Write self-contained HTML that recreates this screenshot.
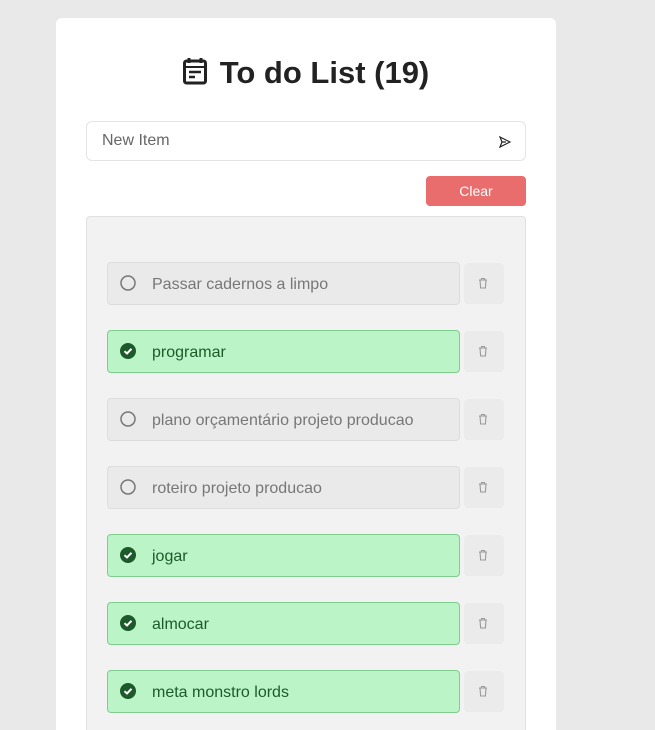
<!DOCTYPE html>
<html><head><meta charset="utf-8"><style>
html,body{margin:0;background:#e9e9e9;width:655px;height:730px;overflow:hidden;font-family:"Liberation Sans",sans-serif;}
.card{position:absolute;left:56px;top:18px;width:500px;height:712px;background:#fff;border-radius:6px 6px 0 0;overflow:hidden}
h1{position:absolute;left:0;top:37px;width:500px;margin:0;text-align:center;font-size:31px;font-weight:bold;color:#222;font-family:"Liberation Sans",sans-serif;}
h1 svg{vertical-align:-2px;margin-right:13px}
.inp{position:absolute;left:30px;top:103px;width:438px;height:38px;border:1px solid #e4e4e4;border-radius:6px;}
.inp span{position:absolute;left:15px;top:10px;font-size:16px;color:#666}
.inp svg{position:absolute;right:14px;top:14px}
.clear{position:absolute;left:370px;top:158px;width:100px;height:30px;background:#e96d6d;border-radius:4px;color:#fff;font-size:14px;text-align:center;line-height:30px}
.box{position:absolute;left:30px;top:198px;width:438px;height:520px;background:#f2f2f2;border:1px solid #e0e0e0;border-bottom:none;border-radius:4px 4px 0 0}
.item{position:absolute;left:20px;width:351px;height:41px;border:1px solid #ddd;background:#eaeaea;border-radius:4px;font-family:"Liberation Sans",sans-serif;font-size:16px;color:#777}
.item.d{background:#bbf5c7;border-color:#7fcc8e;color:#1d5a2a}
.item .t{position:absolute;left:44px;top:13px}
.item svg{position:absolute;left:12px;top:12px}
.tr{position:absolute;left:377px;width:40px;height:41px;background:#ebebeb;border-radius:4px}
.tr svg{position:absolute;left:14px;top:14px}
</style></head><body>
<div class="card">
<h1><svg width="24" height="28" viewBox="0 0 24 28"><rect x="1.5" y="4" width="21" height="22" rx="2" fill="none" stroke="#222" stroke-width="3"/><line x1="6" y1="1" x2="6" y2="6" stroke="#222" stroke-width="3"/><line x1="18" y1="1" x2="18" y2="6" stroke="#222" stroke-width="3"/><line x1="1.5" y1="10" x2="22.5" y2="10" stroke="#222" stroke-width="2"/><line x1="6" y1="15" x2="18" y2="15" stroke="#222" stroke-width="2.5"/><line x1="6" y1="20" x2="12" y2="20" stroke="#222" stroke-width="2.5"/></svg>To do List (19)</h1>
<div class="inp"><span>New Item</span><svg width="12" height="12" viewBox="0 0 12 12"><path d="M1 1L11 6L1 11L3 6Z M3 6H7" fill="none" stroke="#222" stroke-width="1.2"/></svg></div>
<div class="clear">Clear</div>
<div class="box" id="b"></div>
</div>
<script>
var items=[["Passar cadernos a limpo",0],["programar",1],["plano orçamentário projeto producao",0],["roteiro projeto producao",0],["jogar",1],["almocar",1],["meta monstro lords",1]];
var h="";items.forEach(function(it,i){var y=45+i*68;
var ic=it[1]?'<svg width="16" height="16"><circle cx="8" cy="8" r="8" fill="#1d5a2a"/><path d="M4.5 8.2L7 10.5L11.5 5.8" fill="none" stroke="#fff" stroke-width="2"/></svg>':'<svg width="16" height="16"><circle cx="8" cy="8" r="7" fill="none" stroke="#777" stroke-width="1.5"/></svg>';
h+='<div class="item'+(it[1]?' d':'')+'" style="top:'+y+'px">'+ic+'<span class="t">'+it[0]+'</span></div><div class="tr" style="top:'+(y+1)+'px"><svg width="10" height="12" viewBox="0 0 10 12"><path d="M1 3H9M3.5 3V1.5H6.5V3M2 3L2.6 11H7.4L8 3" fill="none" stroke="#999" stroke-width="1.1"/></svg></div>';});
document.getElementById("b").innerHTML=h;
</script>
</body></html>
